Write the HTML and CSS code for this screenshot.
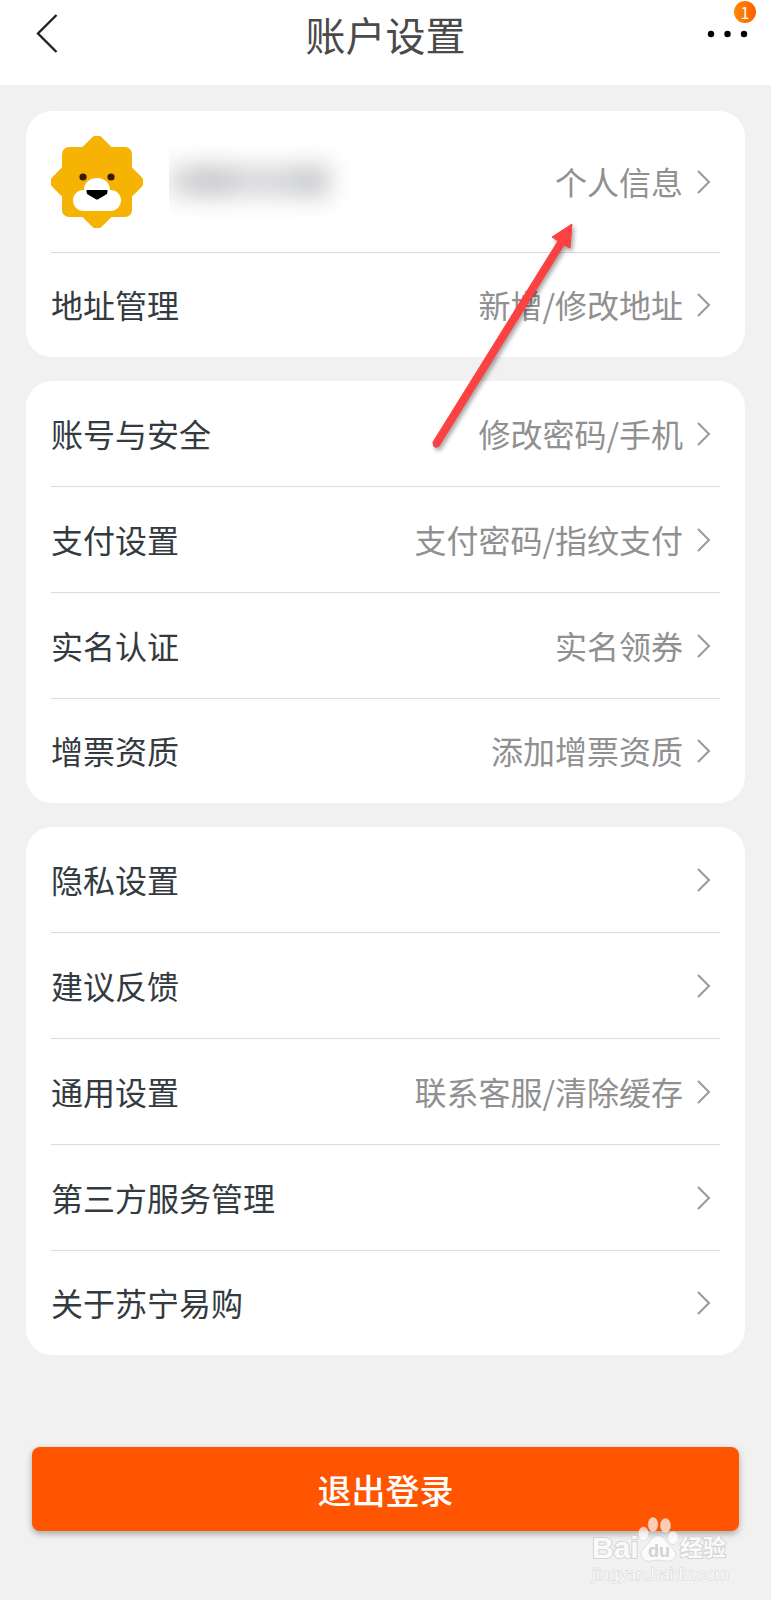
FILE: index.html
```
<!DOCTYPE html>
<html lang="zh-CN">
<head>
  <meta charset="UTF-8">
  <meta name="viewport" content="width=device-width, initial-scale=1.0">
  <title>账户设置</title>
  <link rel="stylesheet" href="styles.css">
</head>
<body>
  <!-- Shared row arrow -->
  <svg class="sprite" aria-hidden="true">
    <symbol id="chevron" viewBox="0 0 14 24">
      <path d="M1 1 L12 12 L1 23" fill="none" stroke="#999" stroke-width="2"/>
    </symbol>
  </svg>

  <header class="topbar">
    <button class="icon-btn" type="button" aria-label="返回">
      <svg width="28" height="40" viewBox="0 0 28 40"><path d="M20.500 1 L2 19.500 L20.500 38" fill="none" stroke="#222" stroke-width="2.400"/></svg>
    </button>
    <h1>账户设置</h1>
    <button class="icon-btn more" type="button" aria-label="更多">
      <svg width="42" height="8" viewBox="0 0 42 8"><circle cx="4" cy="4" r="3.200"/><circle cx="20.500" cy="4" r="3.200"/><circle cx="37" cy="4" r="3.200"/></svg>
      <span class="badge">1</span>
    </button>
  </header>

  <main>
    <nav class="card">
      <a class="row profile" href="#">
        <svg class="avatar" width="92" height="92" viewBox="1 1 92 92">
          <g fill="#f6b303">
            <rect x="12" y="12" width="70" height="70" rx="7"/>
            <rect x="12" y="12" width="70" height="70" rx="7" transform="rotate(45 47 47)"/>
          </g>
          <circle cx="33" cy="42" r="3.600" fill="#3a1a05"/>
          <circle cx="61" cy="42" r="3.600" fill="#3a1a05"/>
          <path d="M34 55 C34 39 60 39 60 55 C67 55 71 60 71 65 C71 71 67 76 60 76 H34 C27 76 23 71 23 65 C23 60 27 55 34 55 Z" fill="#fff"/>
          <path d="M37 55 H57 Q58 55 57 59 L48.500 64 Q47 65 45.500 64 L37 59 Q36 55 37 55 Z" fill="#000"/>
        </svg>
        <span class="username"><i></i></span>
        <span class="value">个人信息</span>
        <svg class="chevron"><use href="#chevron"/></svg>
      </a>
      <a class="row" href="#">
        <span class="label">地址管理</span>
        <span class="value">新增/修改地址</span>
        <svg class="chevron"><use href="#chevron"/></svg>
      </a>
    </nav>

    <nav class="card">
      <a class="row" href="#">
        <span class="label">账号与安全</span>
        <span class="value">修改密码/手机</span>
        <svg class="chevron"><use href="#chevron"/></svg>
      </a>
      <a class="row" href="#">
        <span class="label">支付设置</span>
        <span class="value">支付密码/指纹支付</span>
        <svg class="chevron"><use href="#chevron"/></svg>
      </a>
      <a class="row" href="#">
        <span class="label">实名认证</span>
        <span class="value">实名领券</span>
        <svg class="chevron"><use href="#chevron"/></svg>
      </a>
      <a class="row" href="#">
        <span class="label">增票资质</span>
        <span class="value">添加增票资质</span>
        <svg class="chevron"><use href="#chevron"/></svg>
      </a>
    </nav>

    <nav class="card">
      <a class="row" href="#">
        <span class="label">隐私设置</span>
        <svg class="chevron"><use href="#chevron"/></svg>
      </a>
      <a class="row" href="#">
        <span class="label">建议反馈</span>
        <svg class="chevron"><use href="#chevron"/></svg>
      </a>
      <a class="row" href="#">
        <span class="label">通用设置</span>
        <span class="value">联系客服/清除缓存</span>
        <svg class="chevron"><use href="#chevron"/></svg>
      </a>
      <a class="row" href="#">
        <span class="label">第三方服务管理</span>
        <svg class="chevron"><use href="#chevron"/></svg>
      </a>
      <a class="row" href="#">
        <span class="label">关于苏宁易购</span>
        <svg class="chevron"><use href="#chevron"/></svg>
      </a>
    </nav>

    <button class="logout" type="button">退出登录</button>
  </main>

  <!-- Red pointer to the profile row -->
  <svg class="pointer" width="150" height="236" viewBox="0 0 150 236" aria-hidden="true">
    <path d="M4 224 L129 23 L123 19 L143 6 L141 30 L135 27 L10 228 Q4 232 4 224 Z" fill="#fb4141" stroke="#fb4141"/>
  </svg>

  <!-- Watermark -->
  <svg class="watermark" width="150" height="76" viewBox="0 0 150 76" aria-label="Baidu 经验">
    <g class="wm-shape">
      <ellipse cx="57.500" cy="22" rx="5" ry="7"/>
      <ellipse cx="67" cy="12.500" rx="4.800" ry="7"/>
      <ellipse cx="79.500" cy="13.500" rx="5" ry="7"/>
      <ellipse cx="87" cy="26" rx="5.500" ry="6.500"/>
      <path d="M72 24 C79 24 80 31 85 35 C93 41 90 49 82 49 C77 49 75 48 71 48 C67 48 65 50 61 49 C53 47 54 39 59 35 C64 31 65 24 72 24 Z"/>
    </g>
    <g class="wm-text">
      <text class="wm-logo" x="6" y="46">Bai</text>
      <text class="wm-cn" x="94" y="44">经验</text>
      <text class="wm-url" x="6" y="68">jingyan.baidu.com</text>
    </g>
    <text class="wm-du" x="62" y="45">du</text>
  </svg>
</body>
</html>
```
FILE: styles.css
```
/* Reset basic styles */
* {
  margin: 0;
  padding: 0;
  box-sizing: border-box;
}

body {
  position: relative;
  min-height: 100vh;
  background: #f1f1f1;
  font-family: "Noto Sans CJK SC", "Noto Sans", sans-serif;
  color: #333a40;
}

button {
  border: none;
  background: none;
  font-family: inherit;
  cursor: pointer;
}

.sprite {
  display: none;
}

/* Top bar */
.topbar {
  display: flex;
  align-items: center;
  justify-content: space-between;
  height: 85px;
  padding: 0 22px 18px;
  background: #fff;
}

.topbar h1 {
  font-size: 40px;
  font-weight: 400;
  line-height: 48px;
  color: #4a4a4a;
}

.icon-btn {
  display: flex;
  align-items: center;
  justify-content: flex-end;
  width: 42px;
  height: 48px;
}

.more {
  position: relative;
}

.badge {
  position: absolute;
  top: -9px;
  right: -7px;
  width: 22px;
  height: 22px;
  border-radius: 50%;
  background: linear-gradient(90deg, #ff8a00, #ff5f00);
  color: #fff;
  font-size: 16px;
  line-height: 22px;
  text-align: center;
}

/* Setting cards */
main {
  padding: 26px;
}

.card {
  padding: 0 25px;
  border-radius: 26px;
  background: #fff;
}

.card + .card {
  margin-top: 24px;
}

.row {
  display: flex;
  align-items: center;
  height: 106px;
  padding-right: 9px;
  border-bottom: 1px solid #dcdcdc;
  color: inherit;
  font-size: 32px;
  line-height: 48px;
  text-decoration: none;
}

.row:last-child {
  height: 104px;
  border-bottom: none;
}

.profile {
  height: 142px;
}

.label,
.value {
  padding-bottom: 2px;
}

.value {
  margin-left: auto;
  color: #909090;
}

.chevron {
  flex: none;
  width: 14px;
  height: 24px;
  margin-left: 14px;
}

.label + .chevron {
  margin-left: auto;
}

/* Masked user name */
.username {
  width: 190px;
  height: 72px;
  margin-left: 26px;
  padding-top: 20px;
  overflow: hidden;
}

.username i {
  display: block;
  width: 160px;
  height: 30px;
  background: linear-gradient(90deg, #dcdddf, #c0c1c3 25%, #d6d7d9 50%, #d4d5d7 70%, #c4c5c7 90%);
  filter: blur(12px);
}

.logout {
  display: block;
  width: calc(100% - 12px);
  height: 84px;
  margin: 92px auto 0;
  border-radius: 8px;
  background: #ff5500;
  box-shadow: 0 3px 6px rgba(0, 0, 0, 0.3);
  color: #fff;
  font-size: 34px;
  font-weight: 500;
}

/* Overlays */
.pointer {
  position: absolute;
  top: 218px;
  right: 192px;
  filter: drop-shadow(2px 3px 2px rgba(0, 0, 0, 0.35));
  pointer-events: none;
}

.watermark {
  position: absolute;
  right: 35px;
  bottom: 12px;
  pointer-events: none;
}

.wm-shape {
  fill: #fff;
  fill-opacity: 0.7;
  stroke: #d0d0d0;
  stroke-width: 1;
  stroke-opacity: 0.6;
}

.wm-text {
  fill: #fafafa;
  stroke: #d4d4d4;
  stroke-width: 2;
  paint-order: stroke;
}

.wm-logo {
  font: bold 30px "Liberation Sans", sans-serif;
}

.wm-cn {
  font: bold 23px "Noto Sans CJK SC", sans-serif;
}

.wm-url {
  font: 17px "Liberation Sans", sans-serif;
  stroke-width: 1;
}

.wm-du {
  font: bold 18px "Liberation Sans", sans-serif;
  fill: #d2d2d2;
}
```
